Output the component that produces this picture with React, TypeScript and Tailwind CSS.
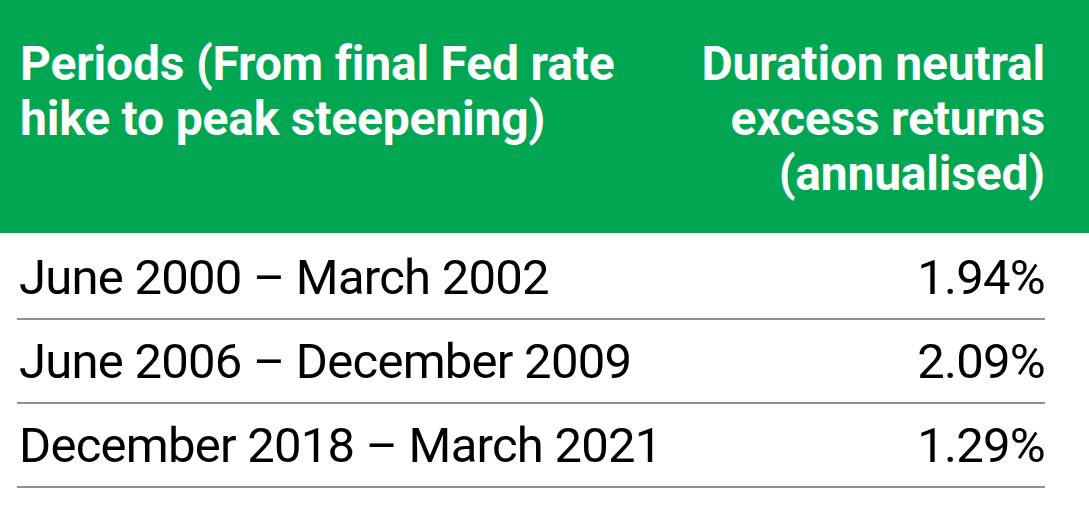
const rows = [
  { period: 'June 2000 – March 2002', value: '1.94%' },
  { period: 'June 2006 – December 2009', value: '2.09%' },
  { period: 'December 2018 – March 2021', value: '1.29%' },
];

export default function App() {
  return (
    <div className="w-[1089px] h-[527px] bg-white font-['Roboto',sans-serif]">
      <div className="h-[233px] bg-[#00a651] text-white font-bold text-[48px] leading-[55px] tracking-[-0.2px] flex justify-between pl-[20px] pr-[44px] pt-[36px]">
        <div>
          Periods (From final Fed rate
          <br />
          hike to peak steepening)
        </div>
        <div className="text-right">
          Duration neutral
          <br />
          excess returns
          <br />
          (annualised)
        </div>
      </div>
      <div className="ml-[17px] mr-[44px] pt-[3px]">
        {rows.map((r) => (
          <div
            key={r.period}
            className="h-[84px] flex items-center justify-between border-b-2 border-[#8f8f94] text-[49px] tracking-[-0.75px] text-black pl-[2px] pt-[2px]"
          >
            <span>{r.period}</span>
            <span>{r.value}</span>
          </div>
        ))}
      </div>
    </div>
  );
}
